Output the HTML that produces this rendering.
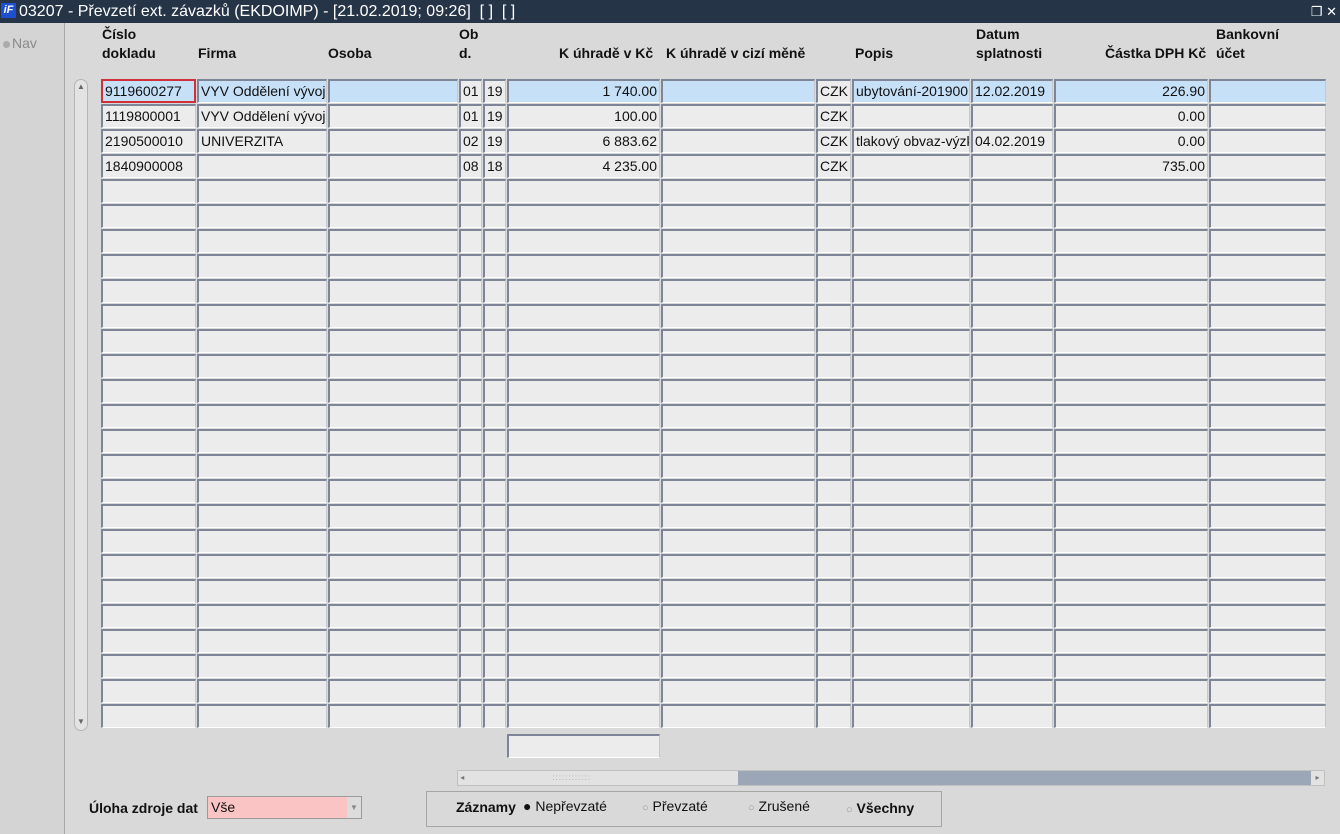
<!DOCTYPE html>
<html><head><meta charset="utf-8"><style>
body{margin:0;width:1340px;height:834px;background:#d9d9d9;position:relative;overflow:hidden;font-family:"Liberation Sans",Arial,sans-serif;font-size:14px;color:#111}
#title{position:absolute;left:0;top:0;width:1340px;height:23px;background:#263448;color:#fff;font-size:16px;line-height:23px}
#title .ic{position:absolute;left:1px;top:3px;width:15px;height:15px;background:#1d4fd0;color:#fff;font-size:11px;font-weight:bold;font-style:italic;line-height:15px;text-align:center}
#title .t{position:absolute;left:19px;top:0}
#left{position:absolute;left:0;top:23px;width:64px;height:811px;background:#d4d4d4;border-right:1px solid #a8a8a8}
.c{position:absolute;box-sizing:border-box;height:24px;background:#ececec;border-top:2px solid #7d8596;border-left:2px solid #7d8596;border-bottom:1px solid #fff;border-right:1px solid #c8c8c8;font-size:14px;line-height:21px;padding-left:2px;white-space:nowrap;overflow:hidden}
.sel{background:#c6e0f8}
.r{text-align:right;padding-right:2px}
.h{position:absolute;font-weight:bold;font-size:14px;line-height:19px}
</style></head><body>
<div id="title"><div class="ic">iF</div><div class="t">03207 - Převzetí ext. závazků (EKDOIMP) - [21.02.2019; 09:26]&nbsp; [ ]&nbsp; [ ]</div><div style="position:absolute;right:3px;top:0;font-size:13px">&#x2752; ✕</div></div>
<div id="left"><div style="position:absolute;left:3px;top:12px;color:#8a8a8a;font-size:14px"><span style="display:inline-block;width:7px;height:7px;border-radius:50%;background:#aaa;margin-right:2px"></span>Nav</div></div>
<div class="h" style="left:102px;top:25px">Číslo<br>dokladu</div>
<div class="h" style="left:198px;top:44px">Firma</div>
<div class="h" style="left:328px;top:44px">Osoba</div>
<div class="h" style="left:459px;top:25px">Ob<br>d.</div>
<div class="h" style="left:559px;top:44px">K úhradě v Kč</div>
<div class="h" style="left:666px;top:44px">K úhradě v cizí měně</div>
<div class="h" style="left:855px;top:44px">Popis</div>
<div class="h" style="left:976px;top:25px">Datum<br>splatnosti</div>
<div class="h" style="left:1105px;top:44px">Částka DPH Kč</div>
<div class="h" style="left:1216px;top:25px">Bankovní<br>účet</div>
<div style="position:absolute;left:74px;top:79px;width:14px;height:652px;background:#e3e3e3;border:1px solid #b5b5b5;border-radius:7px;box-sizing:border-box"></div>
<div style="position:absolute;left:74px;top:79px;width:14px;height:16px;font-size:8px;color:#666;text-align:center;line-height:16px">▲</div>
<div style="position:absolute;left:74px;top:714px;width:14px;height:16px;font-size:8px;color:#666;text-align:center;line-height:16px">▼</div>
<div id="grid"></div>
<div class="c" style="left:507px;top:734px;width:153px"></div>
<div style="position:absolute;left:457px;top:770px;width:868px;height:16px;background:#9ba6b6;border:1px solid #c0c0c0;box-sizing:border-box"></div>
<div style="position:absolute;left:458px;top:771px;width:280px;height:14px;background:#e2e2e2;font-size:8px;color:#777;line-height:14px">&nbsp;◂<span style="margin-left:88px;letter-spacing:1px;color:#aaa">::::::::::::</span></div>
<div style="position:absolute;left:1311px;top:771px;width:13px;height:14px;background:#e2e2e2;font-size:8px;color:#777;line-height:14px;text-align:center">▸</div>
<div class="h" style="left:89px;top:799px">Úloha zdroje dat</div>
<div style="position:absolute;left:207px;top:796px;width:155px;height:23px;background:#fbc4c4;border:1px solid #9a9a9a;box-sizing:border-box;line-height:21px;padding-left:3px">Vše<div style="position:absolute;right:0;top:0;width:14px;height:21px;background:#dcdcdc;font-size:8px;color:#888;text-align:center">▼</div></div>
<div style="position:absolute;left:426px;top:791px;width:516px;height:36px;border:1px solid #a6a6a6;box-sizing:border-box"></div>
<div style="position:absolute;top:799px;left:456px;font-size:14px;white-space:nowrap"><b>Záznamy</b></div>
<div style="position:absolute;top:798px;left:523px;font-size:14px">● Nepřevzaté</div>
<div style="position:absolute;top:798px;left:642px;font-size:14px"><span style="color:#999;font-size:11px">○</span> Převzaté</div>
<div style="position:absolute;top:798px;left:748px;font-size:14px"><span style="color:#999;font-size:11px">○</span> Zrušené</div>
<div style="position:absolute;top:800px;left:846px;font-size:14px"><span style="color:#999;font-size:11px">○</span> <b>Všechny</b></div>
<script>
var cols=[[101,95],[197,130],[328,130],[459,23],[483,23],[507,153],[661,154],[816,35],[852,118],[971,82],[1054,154],[1209,117]];
var right={5:1,10:1};
var data=[
["9119600277","VYV Oddělení vývoje","","01","19","1 740.00","","CZK","ubytování-201900","12.02.2019","226.90",""],
["1119800001","VYV Oddělení vývoje","","01","19","100.00","","CZK","","","0.00",""],
["2190500010","UNIVERZITA","","02","19","6 883.62","","CZK","tlakový obvaz-výzkum","04.02.2019","0.00",""],
["1840900008","","","08","18","4 235.00","","CZK","","","735.00",""]];
var h="";
for(var r=0;r<26;r++){var y=79+r*25;for(var i=0;i<cols.length;i++){var t=data[r]?data[r][i]:"";var cl="c"+(r==0&&i!=7&&i!=3&&i!=4?" sel":"")+(right[i]?" r":"");var st="left:"+cols[i][0]+"px;top:"+y+"px;width:"+cols[i][1]+"px;";if(r==0&&i==0)st+="border:2px solid #d0303a;";h+='<div class="'+cl+'" style="'+st+'">'+t+'</div>';}}
document.getElementById("grid").innerHTML=h;
</script>
</body></html>
